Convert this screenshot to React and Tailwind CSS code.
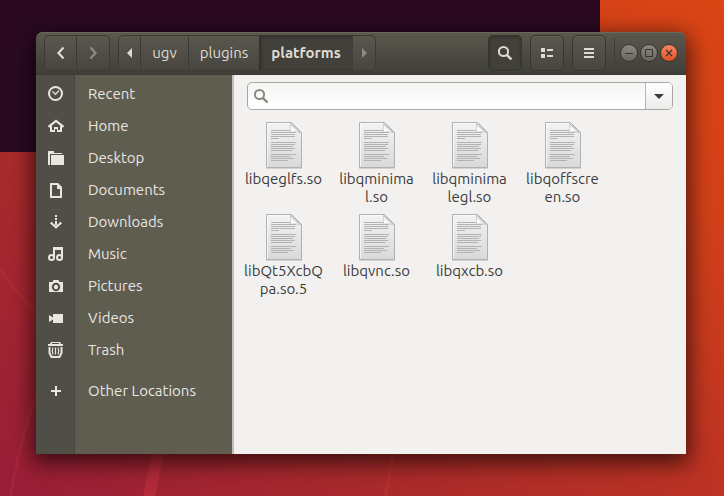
import React from 'react';

const places = [
  { name: 'Recent', icon: 'recent' },
  { name: 'Home', icon: 'home' },
  { name: 'Desktop', icon: 'desktop' },
  { name: 'Documents', icon: 'documents' },
  { name: 'Downloads', icon: 'downloads' },
  { name: 'Music', icon: 'music' },
  { name: 'Pictures', icon: 'pictures' },
  { name: 'Videos', icon: 'videos' },
  { name: 'Trash', icon: 'trash' },
];

// Long names are split by hand so they stay inside their column
const files = [
  ['libqeglfs.so'],
  ['libqminima', 'l.so'],
  ['libqminima', 'legl.so'],
  ['libqoffscre', 'en.so'],
  ['libQt5XcbQ', 'pa.so.5'],
  ['libqvnc.so'],
  ['libqxcb.so'],
];

const icons = {
  recent: (
    <g fill="none" stroke="currentColor">
      <circle cx="7.500" cy="7.500" r="6.500" strokeWidth="2" />
      <path d="M4.500 5.500l3 2.800L11 4.500" strokeWidth="1.200" />
    </g>
  ),
  home: (
    <>
      <path d="M0.500 8.800L8 3l7.500 5.800" fill="none" stroke="currentColor" strokeWidth="2.200" />
      <path d="M2 8h2v4h2V9h4v3h2V8h2v6H9v-3H7v3H2z" fill="currentColor" />
    </>
  ),
  desktop: (
    <path d="M0 1h6v2h8v1H2v11H0zM3 5h13v10H3z" fill="currentColor" />
  ),
  documents: (
    <path fillRule="evenodd" d="M2 1h8l4 4v11H2zM4 3v11h8V7H9V3z" fill="currentColor" />
  ),
  downloads: (
    <>
      <path d="M7 1h2v2H7zM7 4h2v2H7zM7 7h2v4H7z" fill="currentColor" />
      <path d="M2.700 8.500L8 13.300l5.300-4.800" fill="none" stroke="currentColor" strokeWidth="2.200" />
    </>
  ),
  music: (
    <>
      <path d="M5 1h10v10h-2V4H7v7H5z" fill="currentColor" />
      <g fill="none" stroke="currentColor" strokeWidth="2">
        <circle cx="3.500" cy="11.500" r="2.500" />
        <circle cx="11.500" cy="11.500" r="2.500" />
      </g>
    </>
  ),
  pictures: (
    <path
      fillRule="evenodd"
      d="M5.500 2h5l1 2H15v10H1V4h3.500zM8 4.800a4.200 4.200 0 1 0 0 8.400a4.200 4.200 0 0 0 0-8.400zM8 6.800a2.200 2.200 0 1 1 0 4.400a2.200 2.200 0 0 1 0-4.400z"
      fill="currentColor"
    />
  ),
  videos: (
    <path d="M5 4h10v9H5V9.500L1 12V5l4 2.500z" fill="currentColor" />
  ),
  trash: (
    <>
      <path fillRule="evenodd" d="M3 0h9l1 2h2v2H0V2h2zM4 1v1h7V1z" fill="currentColor" />
      <g fill="none" stroke="currentColor">
        <path d="M1.500 5v6l2 4h8l2-4V5" strokeWidth="2" />
        <path d="M5 5.500q-1.300 3.500 0 7M10 5.500q1.300 3.500 0 7M7.500 5.500v7" strokeWidth="1.200" />
      </g>
    </>
  ),
  plus: <path d="M7 3h2v4h4v2H9v4H7V9H3V7h4z" fill="currentColor" />,
  back: <path d="M10.500 2.500L5.500 8l5 5.500" fill="none" stroke="currentColor" strokeWidth="2.200" />,
  forward: <path d="M5.500 2.500l5 5.500-5 5.500" fill="none" stroke="currentColor" strokeWidth="2.200" />,
  triLeft: <path d="M10 3v10L5 8z" fill="currentColor" />,
  triRight: <path d="M6 3v10l5-5z" fill="currentColor" />,
  triDown: <path d="M3 6h10l-5 5z" fill="currentColor" />,
  search: (
    <g fill="none" stroke="currentColor">
      <circle cx="6.500" cy="6.500" r="4.600" strokeWidth="2" />
      <path d="M9.800 9.800l4.700 4.700" strokeWidth="2.400" />
    </g>
  ),
  list: <path d="M2 3h4v4H2zM2 9h4v4H2zM8 4h6v2H8zM8 10h6v2H8z" fill="currentColor" />,
  menu: <path d="M3 3h10v2H3zM3 7h10v2H3zM3 11h10v2H3z" fill="currentColor" />,
};

function Icon({ name }) {
  return (
    <svg viewBox="0 0 16 16" className="w-4 h-4 shrink-0" aria-hidden="true">
      {icons[name]}
    </svg>
  );
}

function FileIcon() {
  return (
    <svg viewBox="0 0 38 48" className="w-[38px] h-12" aria-hidden="true">
      <defs>
        <linearGradient id="paper" x1="0" y1="0" x2="0" y2="1">
          <stop offset="0" stopColor="#f3f3f3" />
          <stop offset="1" stopColor="#d9d9d9" />
        </linearGradient>
        <linearGradient id="fold" x1="0" y1="1" x2="1" y2="0">
          <stop offset="0" stopColor="#ffffff" />
          <stop offset="0.350" stopColor="#fafafa" />
          <stop offset="0.550" stopColor="#a8a8a8" />
        </linearGradient>
      </defs>
      <path d="M1 46h36v1H1z" fill="#000" opacity="0.120" />
      <path d="M1.500 0.500h25l10 10v35h-35z" fill="url(#paper)" stroke="#b0b0b0" />
      <path d="M2.500 1.500h23.500M2.500 1.500v43" stroke="#fff" opacity="0.700" />
      <path d="M25.500 1v9q5-1 11 1z" fill="url(#fold)" stroke="#b4b4b4" strokeWidth="0.500" />
      <g stroke="#b3b3b3">
        <path d="M6 8.500h19M6 10.500h25M6 12.500h24M6 14.500h24M6 16.500h8" />
        <path d="M6 20.500h25M6 22.500h24M6 24.500h22M6 26.500h24M6 28.500h21" />
        <path d="M6 32.500h25M6 34.500h20M6 36.500h23M6 38.500h17" />
      </g>
    </svg>
  );
}

function ToolButton({ label, icon, active }) {
  return (
    <button
      type="button"
      aria-label={label}
      className={`flex items-center justify-center w-[34px] h-9 rounded-[5px] border border-[#36352f] text-[#dfdbd2] ${
        active ? 'bg-[#41403a] shadow-[inset_0_1px_3px_#302f2a]' : 'bg-linear-to-b from-[#59574d] to-[#474640] shadow-[inset_0_1px_#656358]'
      }`}
    >
      <Icon name={icon} />
    </button>
  );
}

function WindowButton({ label, close, children }) {
  return (
    <button
      type="button"
      aria-label={label}
      className={`w-[18px] h-[18px] rounded-full border border-[#35342e] text-[#35342e] ${
        close ? 'bg-linear-to-b from-[#f78460] to-[#df5223]' : 'bg-linear-to-b from-[#8a897f] to-[#696860]'
      }`}
    >
      <svg viewBox="0 0 16 16" className="w-4 h-4" fill="none" stroke="currentColor" aria-hidden="true">
        {children}
      </svg>
    </button>
  );
}

function Wallpaper() {
  return (
    <svg
      className="absolute inset-0 w-full h-full"
      viewBox="0 0 724 496"
      preserveAspectRatio="none"
      fill="none"
      aria-hidden="true"
    >
      <path d="M-4 263Q16 294 40 316M36 396Q20 440 10 498" stroke="#c03540" strokeWidth="3" opacity="0.300" />
      <path d="M160 440L149 498" stroke="#b52b3a" strokeWidth="12" opacity="0.900" />
      <path d="M396 440L385 498" stroke="#c03830" strokeWidth="4" opacity="0.400" />
    </svg>
  );
}

function HeaderBar() {
  return (
    <header className="flex items-center h-[43px] px-2 rounded-t-[7px] border-b border-[#3a3934] bg-linear-to-b from-[#5b584d] to-[#3f3e39] shadow-[inset_0_1px_#6a675b]">
      <div className="flex h-9 rounded-[5px] border border-[#3b3a34] bg-linear-to-b from-[#59574d] to-[#474640]">
        <button type="button" aria-label="Back" className="flex items-center justify-center w-8 border-r border-[#3b3a34] text-[#dfdbd2]">
          <Icon name="back" />
        </button>
        <button type="button" aria-label="Forward" className="flex items-center justify-center w-8 text-[#8f8c82]">
          <Icon name="forward" />
        </button>
      </div>

      <nav
        aria-label="Path"
        className="flex h-9 ml-2 rounded-[5px] border border-[#3b3a34] bg-linear-to-b from-[#59574d] to-[#474640] text-[#dfdbd2] overflow-hidden"
      >
        <button type="button" aria-label="Scroll left" className="flex items-center justify-center w-[21px]">
          <Icon name="triLeft" />
        </button>
        <button type="button" className="w-12 border-l border-[#3b3a34]">ugv</button>
        <button type="button" className="w-[71px] border-l border-[#3b3a34]">plugins</button>
        <button type="button" aria-current="page" className="w-[94px] bg-[#41403a] font-bold shadow-[inset_2px_1px_3px_#302f2a]">
          platforms
        </button>
        <button type="button" aria-label="Scroll right" className="flex items-center justify-center w-[22px] text-[#8f8c82]">
          <Icon name="triRight" />
        </button>
      </nav>

      <div className="flex items-center gap-2 ml-auto">
        <ToolButton label="Search" icon="search" active />
        <ToolButton label="List view" icon="list" />
        <ToolButton label="Menu" icon="menu" />
        <div className="flex items-center gap-0.5 h-[30px] pl-[5px] border-l border-[#3e3d37]">
          <WindowButton label="Minimize">
            <path d="M4 8.500h8" />
          </WindowButton>
          <WindowButton label="Maximize">
            <path d="M4.500 4.500h7v7h-7z" />
          </WindowButton>
          <WindowButton label="Close" close>
            <path d="M5 5l6 6M11 5l-6 6" strokeWidth="1.300" />
          </WindowButton>
        </div>
      </div>
    </header>
  );
}

function Place({ name, icon }) {
  return (
    <li>
      <a href="#" className="flex items-center h-8 pl-3">
        <Icon name={icon} />
        <span className="ml-6">{name}</span>
      </a>
    </li>
  );
}

function App() {
  return (
    <div className="relative flex min-h-screen pt-8 pb-[42px] pl-9 pr-[38px] overflow-hidden bg-[linear-gradient(41deg,#981d38_0%,#a92a2b_30%,#bb3224_55%,#d14019_80%,#db4515_100%)] font-['Ubuntu','Noto_Sans',sans-serif] text-[15px]">
      <Wallpaper />
      {/* Terminal window left open behind the file manager */}
      <div className="absolute top-0 left-0 w-[600px] h-[152px] bg-[#2b0a21]" />

      <main className="relative flex flex-col flex-1 min-w-0 rounded-t-[7px] shadow-[0_6px_22px_3px_rgba(0,0,0,0.65)]">
        <HeaderBar />

        <div className="flex flex-1">
          <nav
            aria-label="Places"
            className="w-[198px] shrink-0 pt-[3px] border-r-2 border-[#c0bfbd] text-[#e8e6e1] bg-[linear-gradient(90deg,#4f4f47_38px,#45453e_38px,#45453e_39px,#5f5c50_39px)]"
          >
            <ul>
              {places.map((place) => (
                <Place key={place.name} name={place.name} icon={place.icon} />
              ))}
            </ul>
            <ul className="mt-[9px]">
              <Place name="Other Locations" icon="plus" />
            </ul>
          </nav>

          <section className="flex-1 min-w-0 bg-[#f2f1f0] text-[#3c3c3c]" aria-label="Files">
            <form className="flex h-7 mt-[7px] mx-[13px] rounded-[5px] border border-[#a9a7a3] bg-linear-to-b from-[#f5f5f4] to-white overflow-hidden" role="search">
              <label htmlFor="search" className="flex items-center pl-[5px] text-[#8b8982]" aria-label="Search files">
                <Icon name="search" />
              </label>
              <input id="search" type="text" className="flex-1 min-w-0 px-2 bg-transparent outline-none" />
              <button
                type="button"
                aria-label="Search options"
                className="flex items-center justify-center w-[27px] border-l border-[#b8b6b2] bg-linear-to-b from-white to-[#ececeb] text-[#3c3c3c]"
              >
                <Icon name="triDown" />
              </button>
            </form>

            <ul className="grid grid-cols-[repeat(auto-fill,93px)] auto-rows-[92px] mt-3 pl-[3px]">
              {files.map((lines) => (
                <li key={lines.join('')} className="flex flex-col items-center">
                  <FileIcon />
                  <span className="text-center leading-[18px] whitespace-pre-line">{lines.join('\n')}</span>
                </li>
              ))}
            </ul>
          </section>
        </div>
      </main>
    </div>
  );
}

export default App;
